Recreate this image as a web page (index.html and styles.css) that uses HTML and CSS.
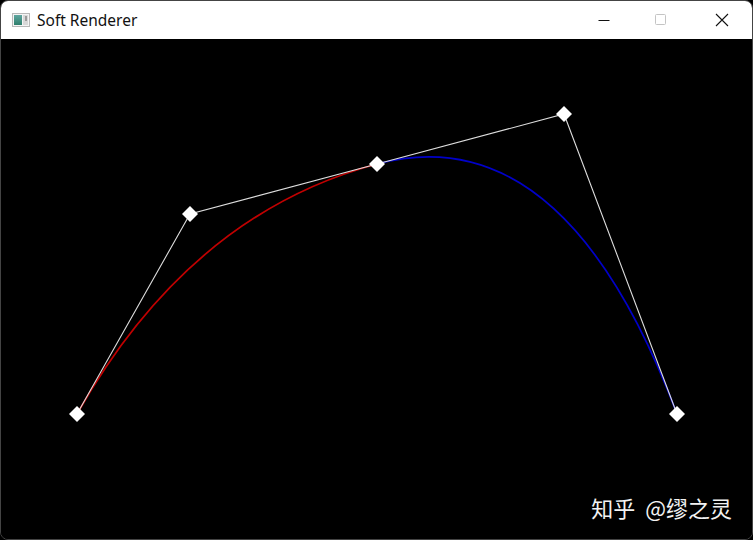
FILE: index.html
```html
<!DOCTYPE html>
<html lang="zh">
<head>
<meta charset="utf-8">
<title>Soft Renderer</title>
<link rel="stylesheet" href="styles.css">
</head>
<body>
<div class="window">
  <div class="titlebar">
    <svg class="app-icon" width="18" height="14" viewBox="0 0 18 14">
      <rect x="0.5" y="0.5" width="17" height="13" fill="#f4f4f4" stroke="#b8b8b8"/>
      <defs>
        <linearGradient id="g" x1="0" y1="0" x2="0" y2="1">
          <stop offset="0" stop-color="#5fa6a0"/>
          <stop offset="1" stop-color="#2f7f6c"/>
        </linearGradient>
      </defs>
      <rect x="2" y="2" width="8" height="10" fill="url(#g)"/>
      <rect x="11" y="2" width="5" height="10" fill="#d8d8d8"/>
      <rect x="13" y="3" width="2" height="5" fill="#9a9a9a"/>
    </svg>
    <span class="title">Soft Renderer</span>
    <div class="controls">
      <div class="ctl"><svg width="12" height="12" viewBox="0 0 12 12"><line x1="0.5" y1="6.5" x2="11.5" y2="6.5" stroke="#111" stroke-width="1"/></svg></div>
      <div class="ctl"><svg width="12" height="12" viewBox="0 0 12 12"><rect x="0.5" y="0.5" width="10" height="10" rx="1" fill="none" stroke="#c4c4c4" stroke-width="1"/></svg></div>
      <div class="ctl"><svg width="14" height="14" viewBox="0 0 14 14"><path d="M1 1 L13 13 M13 1 L1 13" stroke="#111" stroke-width="1.1"/></svg></div>
    </div>
  </div>
  <div class="canvas">
    <svg class="scene" width="751" height="500" viewBox="1 39 751 500">
      <path d="M77 414 Q190 214 377 164" fill="none" stroke="#c00000" stroke-width="1.7"/>
      <path d="M377 164 Q564 114 677 414" fill="none" stroke="#0000c8" stroke-width="1.7"/>
      <polyline points="77,414 190,214 377,164 564,114 677,414" fill="none" stroke="#dcdcdc" stroke-width="1.1"/>
      <g fill="#ffffff">
        <polygon points="77,406 85,414 77,422 69,414"/>
        <polygon points="190,206 198,214 190,222 182,214"/>
        <polygon points="377,156 385,164 377,172 369,164"/>
        <polygon points="564,106 572,114 564,122 556,114"/>
        <polygon points="677,406 685,414 677,422 669,414"/>
      </g>
    </svg>
    <div class="watermark">知乎<span class="at">@缪之灵</span></div>
  </div>
</div>
</body>
</html>
```

FILE: styles.css
```css
html, body {
  margin: 0;
  padding: 0;
  background: #000;
}
.window {
  width: 753px;
  height: 540px;
  box-sizing: border-box;
  border: 1px solid #444;
  border-radius: 8px;
  overflow: hidden;
  display: flex;
  flex-direction: column;
  background: #000;
}
.titlebar {
  height: 38px;
  background: #fff;
  display: flex;
  align-items: center;
  padding-left: 11px;
  flex: none;
}
.app-icon {
  display: block;
  margin-right: 7px;
}
.title {
  font-family: "Noto Sans", "Open Sans", sans-serif;
  font-size: 15.5px;
  color: #111;
}
.controls {
  margin-left: auto;
  display: flex;
  height: 100%;
  padding-right: 1px;
}
.ctl {
  width: 58px;
  display: flex;
  align-items: center;
  justify-content: center;
}
.ctl:nth-child(1) { padding-right: 4px; box-sizing: border-box; }
.ctl:nth-child(2) { padding-right: 6px; box-sizing: border-box; }
.ctl svg { display: block; }
.canvas {
  position: relative;
  flex: 1;
  background: #000;
}
.scene {
  display: block;
}
.watermark {
  position: absolute;
  right: 20px;
  bottom: 21px;
  font-family: "Noto Sans CJK SC", sans-serif;
  font-size: 22px;
  color: #f2f2f2;
  line-height: 1;
  white-space: pre;
}
.at {
  margin-left: 10px;
}
```
